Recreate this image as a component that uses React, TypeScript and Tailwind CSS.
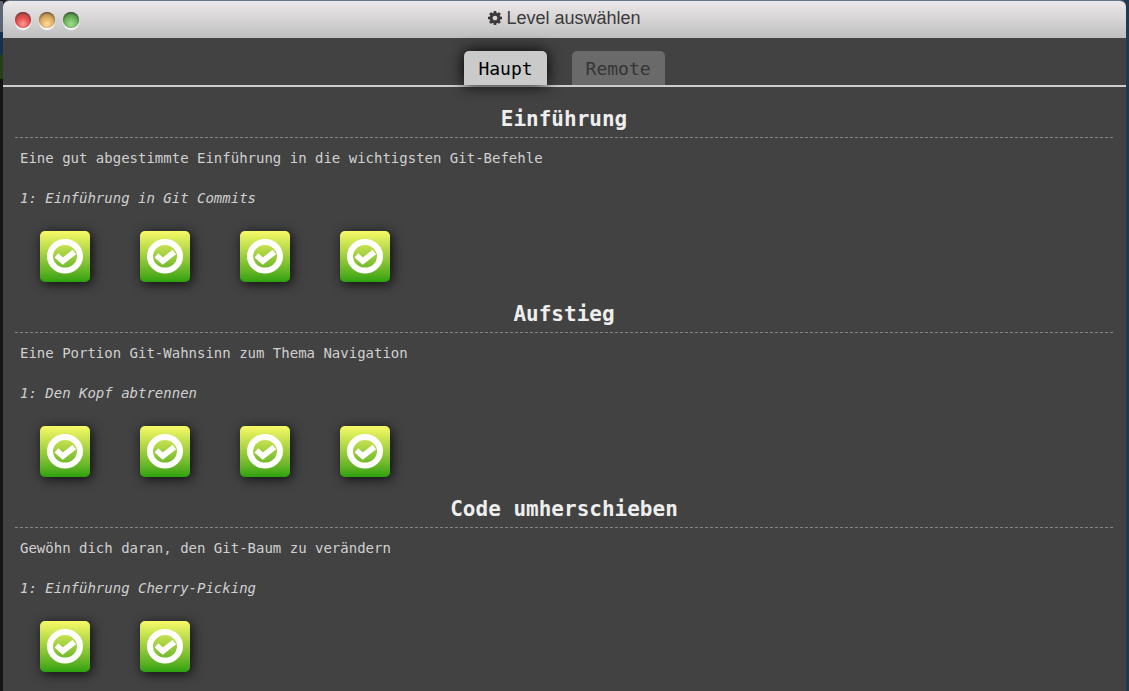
import React, { useState } from "react";

type Section = { title: string; about: string; sequence: string; levels: number };

const sections: Section[] = [
  {
    title: "Einführung",
    about: "Eine gut abgestimmte Einführung in die wichtigsten Git-Befehle",
    sequence: "1: Einführung in Git Commits",
    levels: 4,
  },
  {
    title: "Aufstieg",
    about: "Eine Portion Git-Wahnsinn zum Thema Navigation",
    sequence: "1: Den Kopf abtrennen",
    levels: 4,
  },
  {
    title: "Code umherschieben",
    about: "Gewöhn dich daran, den Git-Baum zu verändern",
    sequence: "1: Einführung Cherry-Picking",
    levels: 2,
  },
];

const tabs = ["Haupt", "Remote"];

const lights = [
  { label: "Schließen", color: "bg-[radial-gradient(circle_at_50%_75%,#ff9a9a_0%,#e54d4d_45%,#8f4747_100%)]" },
  { label: "Minimieren", color: "bg-[radial-gradient(circle_at_50%_75%,#ffdc9c_0%,#e0ae62_45%,#866a45_100%)]" },
  { label: "Maximieren", color: "bg-[radial-gradient(circle_at_50%_75%,#a5dc93_0%,#6ab45a_45%,#42663d_100%)]" },
];

function CogIcon() {
  return (
    <svg aria-hidden="true" viewBox="0 -128 1536 1536" className="h-[14px] w-[14px] fill-current">
      <path d="M1024 640q0-106-75-181t-181-75-181 75-75 181 75 181 181 75 181-75 75-181zm512-109v222q0 12-8 23t-20 13l-185 28q-19 54-39 91 35 50 107 138 10 12 10 25t-9 23q-27 37-99 108t-94 71q-12 0-26-9l-138-108q-44 23-91 38-16 136-29 186-7 28-36 28h-222q-14 0-24.5-8.5t-11.5-21.5l-28-184q-49-16-90-37l-141 107q-10 9-25 9-14 0-25-11-126-114-165-168-7-10-7-23 0-12 8-23 15-21 51-66.5t54-70.5q-27-50-41-99l-183-27q-13-2-21-12.5t-8-23.5v-222q0-12 8-23t19-13l186-28q14-46 39-92-40-57-107-138-10-12-10-24 0-10 9-23 26-36 98.5-107.5t94.5-71.5q13 0 26 10l138 107q44-23 91-38 16-136 29-186 7-28 36-28h222q14 0 24.5 8.5t11.5 21.5l28 184q49 16 90 37l142-107q9-9 24-9 13 0 25 10 129 119 165 170 7 8 7 22 0 12-8 23-15 21-51 66.5t-54 70.5q26 50 41 98l183 28q13 2 21 12.5t8 23.5z" />
    </svg>
  );
}

function SolvedIcon() {
  return (
    <svg aria-hidden="true" viewBox="0 0 36 36" className="h-9 w-9" fill="none" stroke="#fff">
      <ellipse cx="18" cy="17.3" rx="15" ry="14.2" strokeWidth="6" />
      <path d="M9.4 16.4L15.8 22L27.4 13" strokeWidth="5.6" />
    </svg>
  );
}

export default function App() {
  const [active, setActive] = useState("Haupt");

  return (
    <div className="flex min-h-screen bg-[#1f3a50] bg-[linear-gradient(90deg,#151515_50%,#1f3a50_50%)] pt-px">
      <div className="w-[3px] shrink-0 bg-[linear-gradient(180deg,#596573_0px,#596573_31px,#17304f_31px,#17304f_54px,#24401b_54px,#24401b_78px,#151515_78px)]" />
      <main className="mr-[3px] flex-1 rounded-t-md bg-[#424242] font-['DejaVu_Sans_Mono',monospace] shadow-[0_-1px_0_#66788c]">
        <header className="grid h-[37px] grid-cols-[1fr_auto_1fr] items-center rounded-t-md bg-linear-to-b from-[#ece8ea] to-[#bfbfbf] px-3 text-[#3a3a3a]">
          <div className="flex gap-2">
            {lights.map((light) => (
              <button
                key={light.label}
                type="button"
                aria-label={light.label}
                className={`h-4 w-4 rounded-full shadow-[0_2px_1px_#fff,inset_0_1px_2px_#0007] ${light.color}`}
              />
            ))}
          </div>
          <h1 className="flex items-center gap-1 pb-[3px] font-['Liberation_Sans',sans-serif] text-[18px] leading-6">
            <CogIcon />
            Level auswählen
          </h1>
        </header>

        <nav className="flex h-[49px] items-end justify-center gap-[25px] border-b-2 border-[#d0cdd0]">
          {tabs.map((tab) => (
            <button
              key={tab}
              type="button"
              aria-pressed={active === tab}
              onClick={() => setActive(tab)}
              className={`h-[34px] rounded-t-[5px] px-[14px] pt-[2px] text-[18px] leading-8 ${
                active === tab
                  ? "bg-[#cacaca] text-black shadow-[0_0_15px_#000]"
                  : "bg-[#6a6a6a] text-[#353535]"
              }`}
            >
              {tab}
            </button>
          ))}
        </nav>

        <div className="pt-[11px] pr-[13px] pb-2 pl-3">
          {sections.map((section) => (
            <section key={section.title} className="pb-[11px]">
              <h2 className="border-b border-dashed border-[#858585] pt-[3px] text-center text-[21px] leading-9 font-bold text-[#eee]">
                {section.title}
              </h2>
              <p className="px-[5px] text-[14px] leading-10 text-[#d0d0d0]">{section.about}</p>
              <h3 className="px-[5px] text-[14px] leading-10 text-[#d0d0d0] italic">{section.sequence}</h3>
              <div className="flex flex-wrap gap-[50px] px-[25px] pt-[13px]">
                {Array.from({ length: section.levels }, (_, i) => (
                  <button
                    key={i}
                    type="button"
                    aria-label={`${section.title}, Level ${i + 1}`}
                    className="flex h-[51px] w-[50px] items-center justify-center rounded-[5px] bg-linear-to-b from-[#f8fa66] to-[#2ba10d] shadow-[2px_2px_12px_#000c]"
                  >
                    <SolvedIcon />
                  </button>
                ))}
              </div>
            </section>
          ))}
        </div>
      </main>
    </div>
  );
}
